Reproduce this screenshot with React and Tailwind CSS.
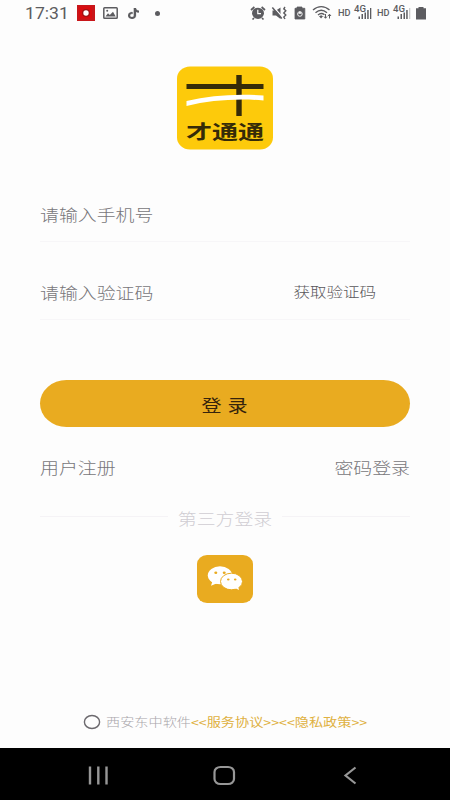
import React from "react";
import { FaTiktok } from "react-icons/fa";

function StatusBar() {
  return (
    <header className="flex h-[26px] items-center text-[#5c5c60]">
      <div className="ml-[25px] w-[52px] font-['Roboto','Noto_Sans',sans-serif] text-[16px] font-normal leading-[26px]">
        <span className="inline-block origin-left translate-y-px scale-x-[1.1]">17:31</span>
      </div>
      <svg className="block h-4 w-[18px]" viewBox="0 0 18 16">
        <rect width="18" height="16" fill="#c8161a" />
        <rect x="2" y="1.5" width="13" height="12" fill="#d90c10" />
        <circle cx="9" cy="8" r="4" fill="#a01214" />
        <circle cx="9" cy="8" r="2.7" fill="#fff" />
      </svg>
      <svg className="ml-2 block h-3 w-[15px]" viewBox="0 0 15 12">
        <rect x=".8" y=".8" width="13.4" height="10.4" rx=".8" fill="none" stroke="currentColor" strokeWidth="1.5" />
        <path d="M2.5 9.5 5 6.3 6.8 8.1 10 4.7 12.7 9.5Z" fill="currentColor" />
        <circle cx="4.2" cy="3.7" r="1" fill="currentColor" />
      </svg>
      <FaTiktok className="ml-[10px] h-[11px] w-[11px]" preserveAspectRatio="none" stroke="currentColor" strokeWidth="10" />
      <i className="ml-4 block h-[5px] w-[5px] rounded-full bg-current" />
      <svg className="ml-[90px] block h-[26px] w-[176px] shrink-0" viewBox="250 0 176 26" fill="none" stroke="currentColor">
        <ellipse cx="258" cy="13.3" rx="6" ry="5.6" fill="currentColor" stroke="none" />
        <path d="m251 10 3.4-3M265 10l-3.4-3M254 18l-1.5 1.5M262 18l1.5 1.5" strokeWidth="1.7" />
        <path d="M257.8 9.8v3.8h3.2" stroke="#fff" strokeWidth="1.2" />
        <path d="M272.5 10.5h3.5l4.5-3v11.5l-4.5-3.5h-3.5Z" fill="currentColor" stroke="none" />
        <path d="m273.5 7 9 10" stroke="#fdfcfe" strokeWidth="1.2" />
        <path d="m272.3 7.5 9.5 11" strokeWidth="1.5" />
        <path d="m285 7-1.2 1.8 2 2-2 2.2 2 2-2 2 1.2 2" strokeWidth="1.4" />
        <path d="M295 8.3h2V7h5v1.3h2.8V19H295Z" fill="currentColor" stroke="currentColor" strokeWidth=".8" />
        <circle cx="299.9" cy="14" r="2.3" stroke="#fff" strokeWidth=".9" />
        <path d="m298.3 13.8 1.6-2.8 1.6 2.8Z" fill="#fff" stroke="none" />
        <path d="M313 10c5-4.5 11.5-4.5 16.5 0M315.5 12.7c3.5-3 8-3 11.5 0M318 15c2-1.7 4.5-1.7 6.5-.3" strokeWidth="1.4" />
        <path d="m319 16.3 2.2-1 1.8 1-1.9 2.2Z" fill="currentColor" stroke="none" />
        <path d="M325.5 14v4m-1.5-1.5 1.5 1.8 1.5-1.8M329.500 18.500v-4m-1.500 1.500 1.500-1.800 1.500 1.800" strokeWidth="1" />
        {[0, 39].map((x) => (
          <g key={x} transform={`translate(${x} 0)`} fill="currentColor" stroke="none">
            <text x="338" y="15.6" fontFamily="Roboto, sans-serif" fontSize="8.5" fontWeight="500" textLength="12.5" lengthAdjust="spacingAndGlyphs">HD</text>
            <text x="354" y="12.3" fontFamily="Roboto, sans-serif" fontSize="8.5" fontWeight="500" textLength="12" lengthAdjust="spacingAndGlyphs">4G</text>
            <path d="M358.5 16.5h1.500V19h-1.500zM361.500 14h1.500v5h-1.500zM364.500 12.500h1.500V19h-1.500z" />
            <path d="M367.200 10h1.500v9h-1.500z" />
            <path d="M370 8h1.300v11H370z" opacity={x ? 0.3 : 1} />
          </g>
        ))}
        <path d="M416 8.300h2.500V7h5v1.300h2.500V19.500h-10Z" fill="currentColor" stroke="none" />
      </svg>
    </header>
  );
}

function Logo() {
  return (
    <svg className="mx-auto mt-10 block h-[84px] w-24 shrink-0" viewBox="0 0 96 84">
      <rect y=".5" width="96" height="83" rx="13" ry="12" fill="#fdca0b" />
      <path d="M9.5 18h77v5h-77zM59.3 9h5.4v41h-5.4z" fill="#352b08" />
      <path d="M9.5 35C34 29.3 60 27.3 86.5 29.5v5C61 32.3 34 34 9.5 40Z" fill="#fff" />
      <text x="9" y="72.7" fill="#352b08" fontFamily="'Noto Sans CJK SC', sans-serif" fontSize="19.5" fontWeight="700" textLength="78" lengthAdjust="spacingAndGlyphs">才通通</text>
    </svg>
  );
}

function WechatIcon() {
  return (
    <svg className="block h-[26px] w-9" viewBox="0 0 36 26">
      <ellipse cx="13" cy="9.3" rx="12.2" ry="9" fill="#fff" />
      <path d="m5.500 15-1.500 4.800 6-2.500Z" fill="#fff" />
      <ellipse cx="24.5" cy="15.5" rx="11" ry="8.3" fill="#fff" stroke="#e9ab20" strokeWidth="1" />
      <path d="m28 22 4 2-1-4.500Z" fill="#fff" />
      <g fill="#e9ab20">
        <ellipse cx="8.8" cy="6.7" rx="1.5" ry="1.2" />
        <ellipse cx="17.2" cy="6.7" rx="1.5" ry="1.2" />
        <ellipse cx="21.3" cy="13.5" rx="1.3" ry="1.1" />
        <ellipse cx="28.2" cy="13.5" rx="1.3" ry="1.1" />
      </g>
    </svg>
  );
}

export default function App() {
  return (
    <div className="flex h-[800px] w-[450px] flex-col overflow-hidden bg-[#fdfdfd] font-['Noto_Sans_CJK_SC',sans-serif] font-light">
      <StatusBar />
      <Logo />
      <main className="flex flex-1 flex-col px-10 text-[16px] text-[#78767a]">
        <div className="mt-[38px] flex h-[54px] items-center border-b border-[#f7f6f8] pb-0.5">
          <span className="inline-block origin-left scale-x-[1.18] whitespace-nowrap">请输入手机号</span>
        </div>
        <div className="mt-6 flex h-[54px] items-center justify-between border-b border-[#f7f6f8] pb-0.5">
          <span className="inline-block origin-left scale-x-[1.18] whitespace-nowrap">请输入验证码</span>
          <span className="mr-[34px] inline-block origin-right scale-x-[1.18] whitespace-nowrap text-[14px] text-[#59575b]">获取验证码</span>
        </div>
        <button className="mt-[60px] h-[47px] w-full shrink-0 rounded-[27px/24px] bg-[#e9ab20] text-[17px] font-normal text-[#35230c]">
          <span className="inline-block translate-y-px scale-x-[1.18] whitespace-pre tracking-[.7px]">登 录</span>
        </button>
        <div className="mt-[28px] flex h-6 items-center justify-between">
          <span className="inline-block origin-left scale-x-[1.18]">用户注册</span>
          <span className="inline-block origin-right scale-x-[1.18]">密码登录</span>
        </div>
        <div className="mt-[27px] flex h-6 items-center text-[#d0cdd3]">
          <i className="mb-1 h-px w-32 bg-[#f5f3f6]" />
          <span className="flex-1 text-center"><span className="inline-block scale-x-[1.18]">第三方登录</span></span>
          <i className="mb-1 h-px w-32 bg-[#f5f3f6]" />
        </div>
        <button className="mx-auto mt-[25px] flex h-12 w-14 shrink-0 items-center justify-center rounded-[10px/9px] bg-[#e9ab20]" aria-label="WeChat">
          <WechatIcon />
        </button>
        <label className="mt-auto mb-[15px] ml-[43px] flex h-[22px] items-center text-[12px]">
          <svg className="block h-4 w-[18px] shrink-0" viewBox="0 0 18 16"><ellipse cx="9" cy="8" rx="7.6" ry="6.5" fill="none" stroke="#6c696e" strokeWidth="1.4" /></svg>
          <span className="ml-[5px] inline-block origin-left scale-x-[1.18] whitespace-nowrap text-[#a9a6ab]">西安东中软件<span className="font-normal text-[#dfb142]">&lt;&lt;服务协议&gt;&gt;&lt;&lt;隐私政策&gt;&gt;</span></span>
        </label>
      </main>
      <nav className="h-[52px] shrink-0 bg-black">
        <svg className="block h-[52px] w-[450px]" viewBox="0 0 450 52" fill="none" stroke="#979797">
          <path d="M90 18.5v18M98.3 18.5v18M106.5 18.5v18" strokeWidth="2.4" />
          <rect x="214.5" y="19" width="19.5" height="17" rx="6" ry="5" strokeWidth="2.2" />
          <path d="m355.5 19.5-10 8 10 8" strokeWidth="2.2" />
        </svg>
      </nav>
    </div>
  );
}
